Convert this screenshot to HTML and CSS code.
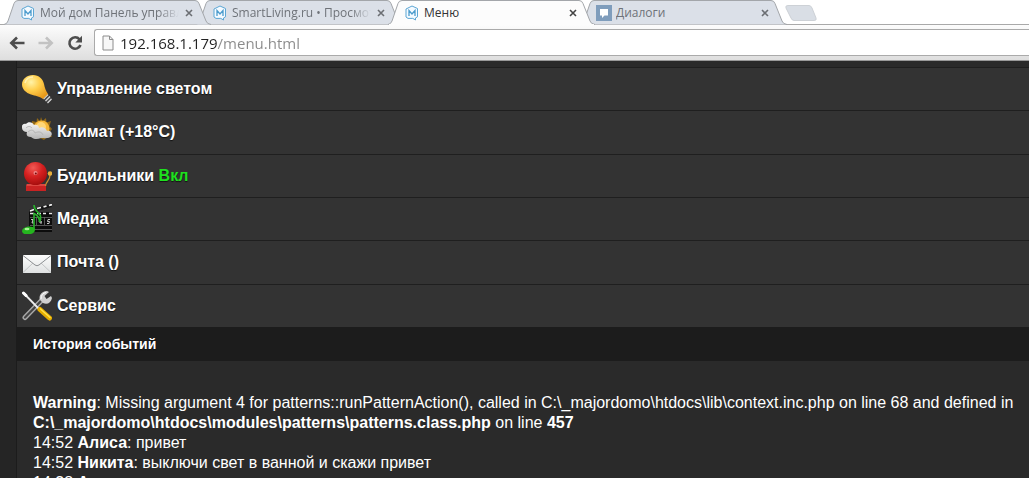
FILE: index.html
```html
<!DOCTYPE html>
<html lang="ru">
<head>
    <meta charset="UTF-8">
    <meta name="viewport" content="width=device-width, initial-scale=1.0">
    <title>Меню</title>
    <link rel="stylesheet" href="styles.css">
</head>
<body>
    <svg class="defs" width="0" height="0" aria-hidden="true">
        <symbol id="tabShape" viewBox="0 0 207 25">
            <path d="M0 24.500 Q3 24 4 21 L10 3.500 Q11 .5 14 .5 H191 Q194 .5 195 3.500 L202 21 Q203 24 207 24.500"/>
        </symbol>
        <symbol id="logo" viewBox="0 0 16 16">
            <path d="M8 1 L13.500 3.500 V11.800 L11.500 13 V15 L8.800 13.400 H4 L2 12 V4 Z" fill="#f4faff" stroke="#5ba6d4"/>
            <path d="M5 11 V5.500 L8 9 L11 5.500 V11" fill="none" stroke="#4c9ccd" stroke-width="1.300"/>
        </symbol>
        <symbol id="cross" viewBox="0 0 8 8">
            <path d="M1 1 L7 7 M7 1 L1 7" fill="none" stroke="currentColor" stroke-width="1.600"/>
        </symbol>
    </svg>

    <header class="browser">
        <nav class="tabs">
            <div class="tab">
                <svg class="shape"><use href="#tabShape"/></svg>
                <svg class="favicon"><use href="#logo"/></svg>
                <a class="title fade" href="#">Мой дом Панель управления</a>
                <button class="close" aria-label="Закрыть"><svg><use href="#cross"/></svg></button>
            </div>
            <div class="tab">
                <svg class="shape"><use href="#tabShape"/></svg>
                <svg class="favicon"><use href="#logo"/></svg>
                <a class="title fade" href="#">SmartLiving.ru • Просмотр темы</a>
                <button class="close" aria-label="Закрыть"><svg><use href="#cross"/></svg></button>
            </div>
            <div class="tab active">
                <svg class="shape"><use href="#tabShape"/></svg>
                <svg class="favicon"><use href="#logo"/></svg>
                <a class="title" href="#">Меню</a>
                <button class="close" aria-label="Закрыть"><svg><use href="#cross"/></svg></button>
            </div>
            <div class="tab">
                <svg class="shape"><use href="#tabShape"/></svg>
                <svg class="favicon" viewBox="0 0 16 16">
                    <rect width="16" height="16" fill="#7f9dbc"/>
                    <path d="M4 4 H12 V10.500 H8.500 L6 13 V10.500 H4 Z" fill="#fff"/>
                </svg>
                <a class="title" href="#">Диалоги</a>
                <button class="close" aria-label="Закрыть"><svg><use href="#cross"/></svg></button>
            </div>
            <button class="new-tab" aria-label="Новая вкладка">
                <svg viewBox="0 0 32 17">
                    <path d="M3 .5 H24 Q26 .5 27 3 L31 13 Q32 15.500 29 15.500 H9 Q7 15.500 6 13 L1 3 Q0 .5 3 .5 Z" fill="#d9dee5" stroke="#cdd1d6"/>
                </svg>
            </button>
        </nav>
        <div class="toolbar">
            <button class="nav-button" aria-label="Назад">
                <svg viewBox="0 0 16 16"><path d="M15.500 8 H2.500 M8 2.500 L2.300 8 L8 13.500" fill="none" stroke="#4d4d4d" stroke-width="2.600"/></svg>
            </button>
            <button class="nav-button" aria-label="Вперёд">
                <svg viewBox="0 0 16 16"><path d="M.5 8 H13.500 M8 2.500 L13.700 8 L8 13.500" fill="none" stroke="#c2c2c2" stroke-width="2.600"/></svg>
            </button>
            <button class="nav-button" aria-label="Обновить">
                <svg viewBox="0 0 16 16">
                    <path d="M12.500 4.300 A5.700 5.700 0 1 0 13.500 10" fill="none" stroke="#4d4d4d" stroke-width="2.600"/>
                    <path d="M15 .8 V7.500 H8.300 Z" fill="#4d4d4d"/>
                </svg>
            </button>
            <label class="address">
                <svg viewBox="0 0 12 16">
                    <path d="M1 1 H7.500 L11 4.500 V15 H1 Z" fill="#f7f7f7" stroke="#8c8c8c"/>
                    <path d="M7.500 1 V4.500 H11" fill="none" stroke="#8c8c8c"/>
                </svg>
                <input class="url" type="text" value="192.168.1.179/menu.html" aria-label="Адрес">
            </label>
        </div>
    </header>

    <main class="page">
        <ul class="menu">
            <li>
                <a href="#">
                    <svg class="icon" viewBox="0 0 30 30">
                        <defs>
                            <radialGradient id="bulb" cx=".35" cy=".3" r=".75">
                                <stop offset="0" stop-color="#fff3a8"/>
                                <stop offset=".45" stop-color="#ffcf4d"/>
                                <stop offset="1" stop-color="#e89a1c"/>
                            </radialGradient>
                        </defs>
                        <path d="M20.500 24 L25 19.500 L30 25 L26 29.500 Z" fill="#4b4b4b"/>
                        <path d="M21.500 25 L26 20.500 M23.500 27 L28 22.500 M25.500 29 L29.500 25" stroke="#d8d8d8" stroke-width="1.200"/>
                        <path d="M11 1 C17 1 21 5 22 10 C22.500 13.500 24 17 26 20 L21 25 C17 22 13.500 22 9 20.500 C4 19 0 15 0 10.500 C0 5 5 1 11 1 Z" fill="url(#bulb)"/>
                        <path d="M3 9 C4 5 7 3 11 3" fill="none" stroke="#fff8d0" stroke-width="1.500" opacity=".7"/>
                    </svg>
                    Управление светом
                </a>
            </li>
            <li>
                <a href="#">
                    <svg class="icon" viewBox="0 0 30 30">
                        <defs>
                            <linearGradient id="cloud" x2="0" y2="1">
                                <stop offset="0" stop-color="#f8f8f8"/>
                                <stop offset="1" stop-color="#b4b4b4"/>
                            </linearGradient>
                        </defs>
                        <path d="M19 0 L20.500 4 L24 1 L24.500 5.500 L29 4 L27.500 9 L30 12 L27.500 15 L30 20 L25 20 L22 23 L12 18 L10 12 L10 4 L14.500 5 L15 1 L18 4 Z" fill="#a87410" opacity=".8"/>
                        <circle cx="19.500" cy="11.500" r="8" fill="#f6b73a"/>
                        <circle cx="19" cy="10" r="5" fill="#ffd778"/>
                        <path d="M0 11 C-1 8 2 6 4 7 C6 4 11 5 12 8 C15 7 17 9 17 11 C20 9 24 11 25 14 C29 13 31 17 29 19 C28 22 22 21 19 21 C15 23 11 22 9 20 C5 20 4 18 5 15 C2 15 0 13 0 11 Z" fill="url(#cloud)"/>
                        <path d="M6 15 C9 12 12 13 13 16 C17 14 20 15 21 18 M4 11 C6 9 8 9 10 11" fill="none" stroke="#b5b5b5"/>
                    </svg>
                    Климат (+18°C)
                </a>
            </li>
            <li>
                <a href="#">
                    <svg class="icon" viewBox="0 0 30 30">
                        <defs>
                            <radialGradient id="bell" cx=".4" cy=".25" r=".8">
                                <stop offset="0" stop-color="#f25a55"/>
                                <stop offset=".5" stop-color="#d42020"/>
                                <stop offset="1" stop-color="#a10c0c"/>
                            </radialGradient>
                        </defs>
                        <path d="M5 23 H24 V30 H4 V25 Z" fill="#c92323"/>
                        <path d="M4.500 24 H24" stroke="#f06a60"/>
                        <circle cx="13.500" cy="12.500" r="11.500" fill="url(#bell)"/>
                        <circle cx="13.500" cy="12" r="2" fill="#e88"/>
                        <circle cx="13.800" cy="12.500" r="1" fill="#7d0707"/>
                        <path d="M28 14 C28 20 24 20 23.500 25" fill="none" stroke="#c98f2c" stroke-width="1.300"/>
                        <circle cx="28" cy="12.500" r="2.300" fill="#e6ae3c"/>
                    </svg>
                    <span>Будильники <span class="on">Вкл</span></span>
                </a>
            </li>
            <li>
                <a href="#">
                    <svg class="icon" viewBox="0 0 30 30">
                        <path d="M7 8 H30 V28 H7 Z" fill="#0c0c0c"/>
                        <path d="M7 6 L29 0 L30 3 L8 9 Z" fill="#151515"/>
                        <path d="M8 7 L12 5.500 M15 4.500 L19 3.500 M21.500 3 L24.500 2 M27 1.500 L30 .5" stroke="#f2f2f2" stroke-width="1.800"/>
                        <path d="M8 9.500 H12 M15 9.500 H19 M21 9.500 H24 M27 9.500 H30" stroke="#e8e8e8" stroke-width="1.600"/>
                        <path d="M8 13.500 H30 M8 21.500 H30 M8 25.500 H30 M14.500 13 V21 M22.500 13 V21" stroke="#666" stroke-width=".8"/>
                        <path d="M9 15.500 H11 L10 19 H12 M19 15 L17 18 H20 M19 17 V20 M28 15.500 H26 L25.500 17.500 H27.500 L27 19.500 H25" fill="none" stroke="#d8d8d8" stroke-width=".9"/>
                        <path d="M12 1 C12 7 17 8 18.500 12 C19 14 18.500 16 17.500 18 C17.500 11 13 11 12 9 V26" fill="none" stroke="#28ae2c" stroke-width="1.600"/>
                        <ellipse cx="6.500" cy="26.500" rx="6.500" ry="4" fill="#25b51f" transform="rotate(-8 6.500 26.500)"/>
                        <ellipse cx="5" cy="25" rx="2.500" ry="1.300" fill="#a6f594"/>
                    </svg>
                    Медиа
                </a>
            </li>
            <li>
                <a href="#">
                    <svg class="icon" viewBox="0 0 30 30">
                        <defs>
                            <linearGradient id="paper" x2="0" y2="1">
                                <stop offset="0" stop-color="#fdfdfd"/>
                                <stop offset="1" stop-color="#dfe1e2"/>
                            </linearGradient>
                        </defs>
                        <path d="M1 8 H29 V26 H1 Z" fill="url(#paper)"/>
                        <path d="M1 25.500 L11 16 M29 25.500 L19 16" stroke="#b9bbbd" stroke-width=".8"/>
                        <path d="M1 8.500 L13 18 Q15 19.500 17 18 L29 8.500" fill="none" stroke="#8d9093"/>
                    </svg>
                    Почта ()
                </a>
            </li>
            <li>
                <a href="#">
                    <svg class="icon" viewBox="0 0 30 30">
                        <path d="M3 26.500 L20.500 8.500" stroke="#aaa" stroke-width="5" stroke-linecap="round"/>
                        <path d="M3 26.500 L19 10" stroke="#444" stroke-width="2.200" stroke-linecap="round"/>
                        <path d="M18 9 C16.500 5 19 .5 25 0 L27 1 L22.500 5 L24.500 8 L29 5 L30 7 C29 12 25 14 21 12 Z" fill="#cfcfcf"/>
                        <path d="M19 8 C19 4 21 2 24 1.500" fill="none" stroke="#fff"/>
                        <path d="M2 2.500 L17 18" stroke="#eee" stroke-width="1.800"/>
                        <path d="M1.500 2 L4 4.500" stroke="#fff" stroke-width="3" stroke-linecap="round"/>
                        <path d="M18 18.500 L27.500 27" stroke="#e5ad00" stroke-width="5" stroke-linecap="round"/>
                        <path d="M18.500 18 L28 26.500" stroke="#ffe14a" stroke-width="1.500" stroke-linecap="round"/>
                    </svg>
                    Сервис
                </a>
            </li>
        </ul>
        <h2>История событий</h2>
        <div class="history">
            <b>Warning</b>: Missing argument 4 for patterns::runPatternAction(), called in C:\_majordomo\htdocs\lib\context.inc.php on line 68 and defined in <b>C:\_majordomo\htdocs\modules\patterns\patterns.class.php</b> on line <b>457</b><br>
            14:52 <b>Алиса</b>: привет<br>
            14:52 <b>Никита</b>: выключи свет в ванной и скажи привет<br>
            14:38 <b>Алиса</b>
        </div>
    </main>
</body>
</html>
```
FILE: styles.css
```css
* {
    box-sizing: border-box;
}
body {
    display: flex;
    flex-direction: column;
    height: 100vh;
    margin: 0;
    overflow: hidden;
    background: #252525;
    font-family: "Liberation Sans", Arial, sans-serif;
    font-size: 16px;
}
button {
    padding: 0;
    border: none;
    background: none;
    cursor: pointer;
}
a {
    color: inherit;
    text-decoration: none;
}
svg {
    display: block;
    flex: none;
}
.defs {
    position: absolute;
}

/* browser window */
.browser {
    flex: none;
    background: #fff;
    font-family: "Open Sans", "Noto Sans", sans-serif;
}
.tabs {
    display: flex;
    height: 25px;
    padding-left: 4px;
    border-bottom: 1px solid #a9a9a9;
}
.tab {
    position: relative;
    display: flex;
    align-items: center;
    width: 207px;
    height: 25px;
    margin-right: -15px;
    padding: 0 14px 0 16px;
    color: #6e7278;
    font-size: 12px;
    z-index: 1;
}
.tab:first-child {
    z-index: 2;
}
.shape {
    position: absolute;
    top: 0;
    left: 0;
    width: 207px;
    height: 25px;
    fill: #dbe0e8;
    stroke: #a3a6aa;
}
.tab.active {
    color: #333;
    z-index: 3;
}
.active .shape {
    fill: #fcfcfc;
}
.active::after {
    content: "";
    position: absolute;
    left: 1px;
    right: 1px;
    bottom: 0;
    height: 1px;
    background: #fcfcfc;
}
.favicon {
    position: relative;
    width: 16px;
    height: 16px;
}
.title {
    position: relative;
    flex: 1;
    margin: 0 2px 0 4px;
    overflow: hidden;
    white-space: nowrap;
}
.fade {
    -webkit-mask-image: linear-gradient(90deg, #000 85%, transparent);
    mask-image: linear-gradient(90deg, #000 85%, transparent);
}
.close {
    position: relative;
    width: 16px;
    height: 16px;
    color: #6b6e73;
}
.close svg {
    width: 8px;
    height: 8px;
    margin: 0 auto;
}
.active .close {
    color: #444;
}
.new-tab {
    width: 32px;
    height: 17px;
    margin: 5px 0 0 13px;
}
.toolbar {
    display: flex;
    align-items: center;
    gap: 13px;
    height: 36px;
    padding-left: 9px;
    border-bottom: 1px solid #999;
    background: linear-gradient(#fcfcfc, #dedede);
}
.nav-button svg {
    width: 16px;
    height: 16px;
}
.address {
    display: flex;
    flex: 1;
    align-items: center;
    gap: 6px;
    height: 27px;
    margin-left: -2px;
    padding-left: 7px;
    border: 1px solid #aaa;
    border-right: none;
    border-radius: 3px 0 0 3px;
    background: #fff;
}
.address svg {
    width: 12px;
    height: 16px;
}
/* host is dark, path is grey */
.url {
    flex: 1;
    padding: 0;
    border: none;
    outline: none;
    background: linear-gradient(90deg, #222 97px, #8a8a8a 97px);
    -webkit-background-clip: text;
    background-clip: text;
    color: transparent;
    font-family: inherit;
    font-size: 15px;
}

/* menu page */
.page {
    flex: 1;
    margin-left: 16px;
    padding-top: 6px;
    border-left: 1px solid #1c1c1c;
    background: #2a2a2a;
    color: #fff;
}
.menu {
    display: grid;
    grid-auto-rows: 1fr;
    min-height: 260px;
    margin: 0;
    padding: 0;
    list-style: none;
}
.menu li {
    border-top: 1px solid #1f1f1f;
    background: #333;
}
.menu a {
    display: flex;
    align-items: center;
    gap: 5px;
    height: 100%;
    padding-left: 5px;
    font-weight: bold;
    text-shadow: 0 1px 1px #111;
}
.icon {
    width: 30px;
    height: 30px;
}
.on {
    color: #1fe01f;
}
h2 {
    margin: 0;
    padding: 8px 16px;
    background: #1c1c1c;
    font-size: 14px;
    line-height: 18px;
    text-shadow: 0 1px 1px #111;
}
.history {
    padding: 32px 14px 0 16px;
    line-height: 20px;
}
```
